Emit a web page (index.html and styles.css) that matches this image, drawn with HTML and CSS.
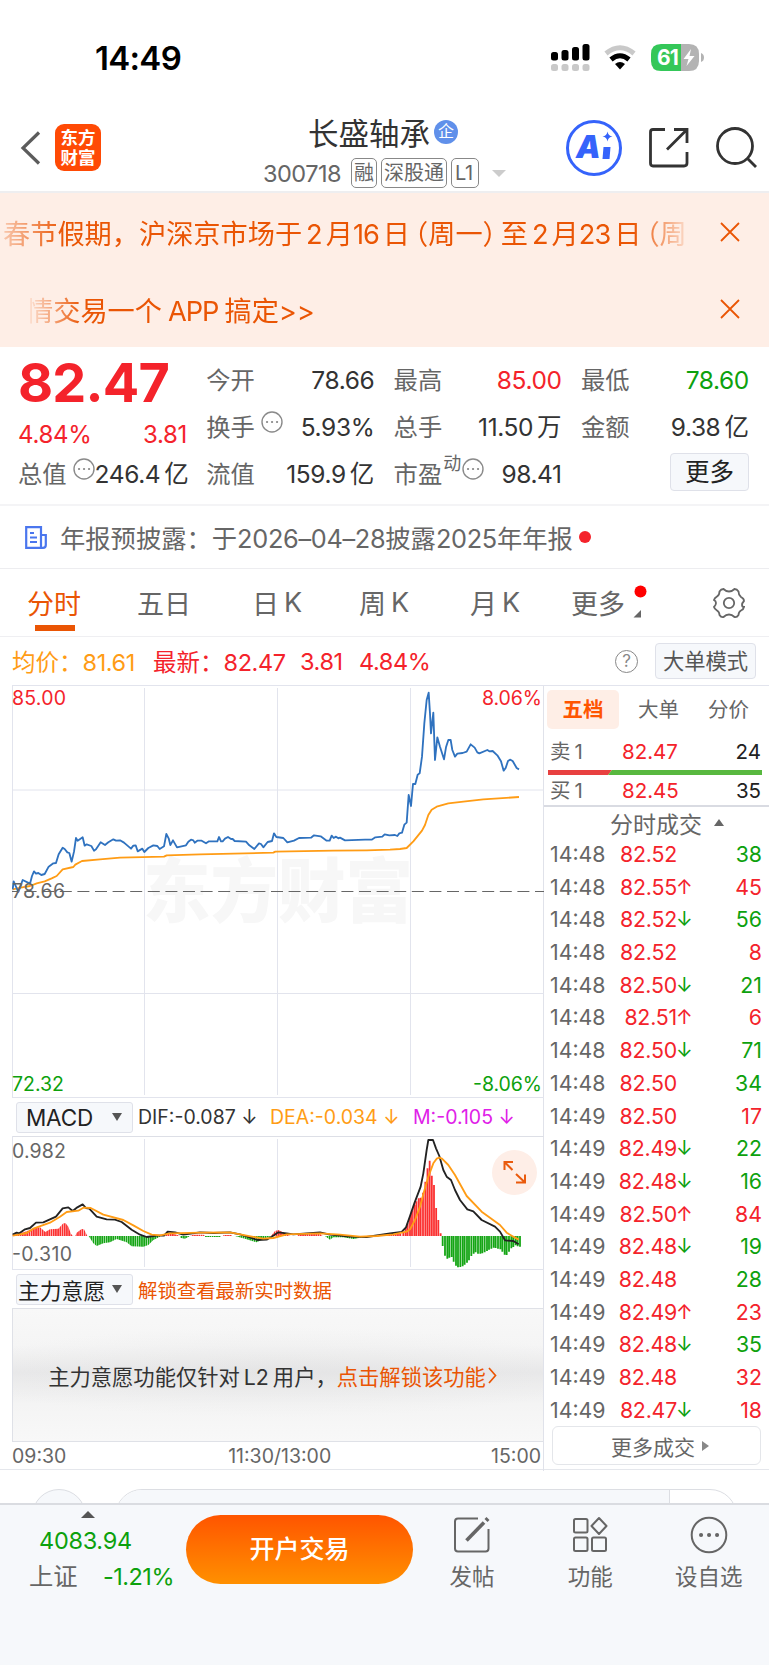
FILE: index.html
```html
<!DOCTYPE html>
<html lang="zh-CN">
<head>
<meta charset="utf-8">
<title>长盛轴承 300718</title>
<link rel="stylesheet" href="styles.css">
</head>
<body>
<div class="app">
  <div class="status">
    <span class="clock">14:49</span>
    <svg class="status-icons" width="156" height="30" viewBox="550 43 156 30">
      <g fill="#000"><rect x="551" y="52" width="7" height="8.500" rx="2.500"/><rect x="561.500" y="50" width="7" height="10.500" rx="2.500"/><rect x="572" y="47" width="7" height="13.500" rx="2.500"/><rect x="582.500" y="44" width="7" height="16.500" rx="2.500"/></g>
      <g fill="#c9c9c9"><rect x="551" y="64" width="7" height="7" rx="2.500"/><rect x="561.500" y="64" width="7" height="7" rx="2.500"/><rect x="572" y="64" width="7" height="7" rx="2.500"/><rect x="582.500" y="64" width="7" height="7" rx="2.500"/></g>
      <path d="M606 53.500Q620 42 634 53.500" fill="none" stroke="#c9c9c9" stroke-width="5"/>
      <path d="M611 59.500Q620 52 629 59.500" fill="none" stroke="#000" stroke-width="5"/>
      <path d="M615 64Q620 60 625 64L620 69.500Z"/>
      <path d="M661 44H681V71H661Q651 71 651 61V54Q651 44 661 44Z" fill="#34c759"/>
      <path d="M681 44H689Q699 44 699 54V61Q699 71 689 71H681Z" fill="#b3b3b3"/>
      <path d="M701 53Q704 54 704 57.500T701 62Z" fill="#b3b3b3"/>
      <text x="657" y="65" class="battery-num">61</text>
      <path d="M691 49L683.500 59H688.500L686.500 66L694.500 56H689.500Z" fill="#fff"/>
    </svg>
  </div>

  <header class="header">
    <svg class="back" width="22" height="36" viewBox="0 0 22 36"><path d="M19 2.500L3 18L19 33.500" fill="none" stroke="#5c5c5c" stroke-width="3.200"/></svg>
    <div class="logo"><span>东方</span><span>财富</span></div>
    <div class="stock">
      <div class="stock-name">长盛轴承<i class="corp">企</i></div>
      <div class="stock-code"><span class="code">300718</span><span class="tag">融</span><span class="tag">深股通</span><span class="tag tag-l1">L1</span><i class="caret"></i></div>
    </div>
    <svg class="tools" width="194" height="58" viewBox="564 119 194 58">
      <circle cx="594" cy="148" r="26.500" fill="none" stroke="#3563fb" stroke-width="3"/>
      <text x="576" y="158" class="ai">A</text><path d="M603.500 147H610.500L609.500 159H602.500Z" fill="#3563fb"/>
      <path d="M607.500 131.500Q608.200 135.800 612.500 136.500Q608.200 137.200 607.500 141.500Q606.800 137.200 602.500 136.500Q606.800 135.800 607.500 131.500Z" fill="#3563fb"/>
      <g fill="none" stroke="#333" stroke-width="2.800"><path d="M665 129.500H653Q650.500 129.500 650.500 132V163Q650.500 166 653 166H684Q687 166 687 163V152M674 129.500H687V143M686 130.500L667 149.500"/><circle cx="735" cy="146" r="17.500"/><path d="M747 158L756 167"/></g>
    </svg>
  </header>

  <section class="banners">
    <div class="banner"><div class="marquee fade-both">春节假期，沪深京市场于<span class="num">2</span>月<span class="num">16</span>日<span class="par">（</span>周一<span class="par close-par">）</span>至<span class="num">2</span>月<span class="num">23</span>日<span class="par">（</span>周一</div>
      <svg class="close" width="20" height="20" viewBox="0 0 20 20"><path d="M1 1L19 19M19 1L1 19"/></svg></div>
    <div class="banner second"><div class="marquee fade-left">情交易一个<span class="app-word">APP</span>搞定&gt;&gt;</div>
      <svg class="close" width="20" height="20" viewBox="0 0 20 20"><path d="M1 1L19 19M19 1L1 19"/></svg></div>
  </section>

  <section class="quote">
    <div class="qcol lead">
      <div class="price">82.47</div>
      <div class="change"><span>4.84%</span><span>3.81</span></div>
      <div class="qrow"><label>总值<svg class="dots" viewBox="0 0 22 22"><circle cx="11" cy="11" r="10"/><path d="M6 11h.1M11 11h.1M16 11h.1"/></svg></label><b>246.4<i>亿</i></b></div>
    </div>
    <div class="qcol">
      <div class="qrow"><label>今开</label><b>78.66</b></div>
      <div class="qrow"><label>换手<svg class="dots gap" viewBox="0 0 22 22"><circle cx="11" cy="11" r="10"/><path d="M6 11h.1M11 11h.1M16 11h.1"/></svg></label><b>5.93%</b></div>
      <div class="qrow"><label>流值</label><b>159.9<i>亿</i></b></div>
    </div>
    <div class="qcol">
      <div class="qrow"><label>最高</label><b class="up">85.00</b></div>
      <div class="qrow"><label>总手</label><b>11.50<i>万</i></b></div>
      <div class="qrow"><label>市盈<sup>动</sup><svg class="dots tight" viewBox="0 0 22 22"><circle cx="11" cy="11" r="10"/><path d="M6 11h.1M11 11h.1M16 11h.1"/></svg></label><b>98.41</b></div>
    </div>
    <div class="qcol">
      <div class="qrow"><label>最低</label><b class="down">78.60</b></div>
      <div class="qrow"><label>金额</label><b>9.38<i>亿</i></b></div>
      <div class="qrow end"><span class="more-btn">更多</span></div>
    </div>
  </section>

  <section class="notice">
    <svg width="22" height="23" viewBox="0 0 22 23"><path d="M1.200 1.200H16V21.800H1.200ZM16 9H20.800V19Q20.800 21.800 18 21.800H14M5 7H9M5 11.500H12M5 16H12" fill="none" stroke="#4a76ee" stroke-width="2.200"/></svg>
    <span class="notice-text">年报预披露：于<em>2026–04–28</em>披露<em>2025</em>年年报</span><i class="red-dot"></i>
  </section>

  <nav class="tabs">
    <span class="on">分时</span><span>五日</span><span>日<em>K</em></span><span>周<em>K</em></span><span>月<em>K</em></span>
    <span class="tab-more">更多<svg width="16" height="36" viewBox="0 0 16 36"><circle cx="9.500" cy="6.500" r="6" fill="#f00"/><path d="M10 25V32.500H2.500Z" fill="#666"/></svg></span>
    <svg class="gear" width="34" height="32" viewBox="-17 -16 34 32"><path d="M-5.500 -14Q-3 -11.500 0 -11.500T5.500 -14Q8 -14 9.500 -11.500Q9.500 -8 12 -6Q15 -4.500 15 -2Q13 0 13 2T15 4Q14.500 6.500 12 7.500Q9.500 9 9.500 12Q8 14.500 5.500 14Q3 11.500 0 11.500T-5.500 14Q-8 14.500 -9.500 12Q-9.500 9 -12 7.500Q-14.500 6 -15 4Q-13 2 -13 0T-15 -3Q-14.500 -5 -12 -6.500Q-9.500 -8 -9.500 -11.500Q-8 -14 -5.500 -14Z"/><circle r="5.200"/></svg>
  </nav>

  <section class="summary">
    <span class="avg">均价：<em>81.61</em></span><span class="last">最新：<em>82.47</em></span><span class="last n3"><em>3.81</em></span><span class="last n4"><em>4.84%</em></span>
    <i class="help">?</i><span class="mode-btn">大单模式</span>
  </section>

  <main class="board">
    <div class="charts">
      <svg class="minute" width="532" height="413" viewBox="12 685 532 413">
        <text class="mark" x="143" y="917" textLength="270" lengthAdjust="spacingAndGlyphs">东方财富</text>
        <path d="M12 685.500H544M12.500 685V1098M144.500 688V1095M277.500 688V1095M410.500 688V1095M12 790H544M12 993.500H544M12 1097.500H544" stroke="#e2e4ed" fill="none"/>
        <path d="M12 891.500H544" stroke="#666" stroke-dasharray="12 5.600" stroke-dashoffset="5"/>
        <g transform="translate(0 680) scale(.33333)" fill="none" stroke-width="5.500" stroke-linejoin="round">
          <polyline stroke="#ff9c15" points="38,628 62,623 90,618 110,610 134,604 155,595 170,588 188,568 220,561 226,554 246,543 300,538 360,533 492,530 500,526 600,523 820,518 826,515 1000,512 1100,511 1170,509 1200,507 1220,504 1240,484 1266,452 1275,435 1285,405 1295,389 1310,380 1345,370 1390,365 1450,358 1557,351"/>
          <polyline stroke="#2f72bf" points="38,628 41,604 55,636 68,600 90,611 96,588 102,574 108,581 115,579 124,585 134,582 146,560 160,550 168,549 176,523 188,503 194,507 202,517 208,519 215,545 222,515 228,474 233,482 248,472 254,497 260,493 274,498 282,512 288,508 302,487 315,495 325,487 340,478 348,482 360,481 372,488 393,506 400,497 407,496 413,514 427,506 433,516 445,504 460,496 472,498 479,507 492,499 499,462 506,475 511,495 519,481 531,502 558,496 565,485 573,479 580,481 584,488 592,482 605,482 618,490 627,484 652,484 657,471 663,484 668,484 675,476 684,471 693,477 698,477 704,483 738,485 748,496 763,507 777,490 783,492 790,502 803,486 816,483 822,460 829,471 850,474 862,487 882,482 897,474 933,473 942,466 962,469 980,482 989,482 995,467 1001,474 1008,470 1015,475 1020,473 1035,481 1095,479 1115,479 1126,472 1147,470 1154,463 1168,466 1185,465 1192,468 1198,460 1206,458 1213,434 1220,428 1226,345 1233,378 1239,312 1246,312 1253,284 1259,280 1266,230 1273,130 1280,60 1286,38 1290,100 1293,160 1300,98 1305,240 1312,172 1320,200 1332,238 1338,202 1345,180 1352,180 1357,210 1365,230 1372,221 1388,219 1400,215 1412,193 1424,203 1432,217 1438,220 1462,210 1468,214 1478,213 1492,226 1503,244 1511,272 1517,264 1524,243 1530,239 1538,243 1550,264 1557,268"/>
        </g>
        <g class="axis">
          <text x="12" y="705" fill="#f4232b" textLength="54">85.00</text><text x="542" y="705" fill="#f4232b" text-anchor="end" textLength="60">8.06%</text>
          <text x="12" y="898" fill="#666" textLength="53">78.66</text>
          <text x="12" y="1090.500" fill="#0da10d" textLength="52">72.32</text><text x="542" y="1090.500" fill="#0da10d" text-anchor="end" textLength="69">-8.06%</text>
        </g>
      </svg>

      <div class="indicator macd-row">
        <span class="pick macd-pick">MACD<i></i></span>
        <span class="dif">DIF:-0.087 ↓</span><span class="dea">DEA:-0.034 ↓</span><span class="macd">M:-0.105 ↓</span>
      </div>
      <svg class="macd-chart" width="532" height="134" viewBox="12 1136 532 134">
        <defs><pattern id="ticks" width="6.620" height="400" patternUnits="userSpaceOnUse"><rect width="5.200" height="400" fill="#14a514"/></pattern>
        <pattern id="ticksUp" width="6.620" height="400" patternUnits="userSpaceOnUse"><rect width="5.200" height="400" fill="#fb3030"/></pattern></defs>
        <path d="M12 1136.200H544" stroke="#dddfe6" stroke-width="1.800"/>
        <path d="M12.500 1136V1270M144.500 1139V1267M277.500 1139V1267M410.500 1139V1267M12 1269.500H544" stroke="#e2e4ed"/>
        <g transform="translate(0 1090) scale(.33333)" fill="none">
          <path fill="url(#ticksUp)" d="M38 438V434L60 430L80 424L100 414L120 412L136 426L150 418L175 416L190 400L197 400L205 410L213 432L220 438ZM226 438L230 428L245 417L252 418L262 438ZM495 438L505 428L530 434L540 438ZM570 438L580 434L610 434L616 438ZM670 438V435H696V438ZM813 438L825 423L835 420L855 430L870 438ZM890 438L900 433L960 432L968 438ZM1155 438L1170 433L1204 431V438Z"/>
          <path fill="url(#ticks)" d="M266 438L280 460L290 468L310 460L330 457L350 447L380 457L395 469L430 470L445 465L460 450L480 440V438ZM540 438V443L555 446L570 438ZM615 438V441H662V438ZM705 438L740 448L770 457L790 447L815 438ZM975 438L990 449L1000 442L1030 442L1060 447L1110 438Z"/>
          <g transform="translate(1140 0)" stroke-width="5.400">
            <path stroke="#fb3030" d="M70 438V425M77 438V414M83 438V400M90 438V378M96 438V362M103 438V345M109 438V334M116 438V325M122 438V323M129 438V308M136 438V275M142.500 438V235M149 438V212M155.500 438V257M162 438V285M168.500 438V354M175 438V390M182 438V430"/>
            <path stroke="#14a514" d="M188 438V468M195 438V497M202 438V506M208 438V503M215 438V501M221 438V515M228 438V527M234 438V532M241 438V531M248 438V529M254 438V524M261 438V518M267 438V511M274 438V498M281 438V491M287 438V487M294 438V491M301 438V491M307 438V490M314 438V487M321 438V483M327 438V479M334 438V476M341 438V473M347 438V474M354 438V476M361 438V478M367 438V485M374 438V494M380 438V495M387 438V485M394 438V475M400 438V471M407 438V466M413 438V469M420 438V470"/>
          </g>
          <g stroke-width="5.500" stroke-linejoin="round">
            <polyline stroke="#222" points="38,434 50,428 58,430 75,418 90,414 108,398 130,397 168,380 188,355 205,352 218,363 232,352 248,343 258,354 268,356 290,380 320,388 345,389 365,396 395,419 420,434 440,441 470,437 492,437 503,425 525,427 550,434 600,427 640,429 690,427 720,433 745,441 772,450 800,449 815,440 835,427 860,430 880,433 960,427 990,434 1050,440 1100,441 1140,435 1170,430 1205,426 1218,412 1230,378 1243,340 1262,290 1270,250 1280,180 1285,150 1299,150 1308,175 1318,198 1330,240 1340,260 1353,270 1365,300 1380,330 1402,358 1420,364 1445,390 1485,410 1500,425 1515,451 1540,453 1556,463"/>
            <polyline stroke="#ff9c15" points="38,437 60,433 80,429 100,416 150,398 180,380 200,366 235,362 250,353 272,354 310,374 370,390 400,406 430,423 455,434 480,436 510,430 600,428 690,427 740,437 790,446 820,444 860,433 960,430 1020,434 1080,440 1130,438 1180,433 1220,425 1230,418 1245,390 1260,350 1272,305 1285,260 1300,220 1310,206 1318,203 1326,206 1345,225 1365,255 1400,318 1445,365 1500,405 1520,428 1540,440 1556,449"/>
          </g>
        </g>
        <g class="axis" fill="#666"><text x="12" y="1157.500" textLength="54">0.982</text><text x="12" y="1261" textLength="60">-0.310</text></g>
        <circle cx="514.500" cy="1172.500" r="22.500" fill="#feeee7"/>
        <path d="M504.500 1170V1162H513M505 1162.500L512.500 1170M525 1174.500V1182.500H516M524.500 1182L516 1174" fill="none" stroke="#ea5a0c" stroke-width="2"/>
      </svg>
      <div class="indicator will-row"><span class="pick">主力意愿<i></i></span><span class="unlock">解锁查看最新实时数据</span></div>
      <div class="locked"><span>主力意愿功能仅针对<em>L2</em>用户，</span><span class="go">点击解锁该功能<svg width="9" height="17" viewBox="0 0 9 17"><path d="M1 1L7.500 8.500L1 16" fill="none" stroke="#ea5504" stroke-width="1.700"/></svg></span></div>
      <div class="times"><span>09:30</span><span class="mid">11:30/13:00</span><span>15:00</span></div>
    </div>

    <aside class="book">
      <div class="book-tabs"><span class="active">五档</span><span>大单</span><span>分价</span></div>
      <div class="level"><span>卖<em>1</em></span><b>82.47</b><i>24</i></div>
      <svg class="ratio" width="214" height="5" viewBox="0 0 214 5"><path d="M0 0H64L60 5H0Z" fill="#e84040"/><path d="M64 0H214V5H60Z" fill="#58b83f"/></svg>
      <div class="level buy"><span>买<em>1</em></span><b>82.45</b><i>35</i></div>
      <div class="deals-title">分时成交<i></i></div>
      <div class="deals">
        <div class="deal"><span>14:48</span><b>82.52</b><u></u><i class="down">38</i></div>
        <div class="deal"><span>14:48</span><b>82.55</b><u class="up">↑</u><i class="up">45</i></div>
        <div class="deal"><span>14:48</span><b>82.52</b><u class="down">↓</u><i class="down">56</i></div>
        <div class="deal"><span>14:48</span><b>82.52</b><u></u><i class="up">8</i></div>
        <div class="deal"><span>14:48</span><b>82.50</b><u class="down">↓</u><i class="down">21</i></div>
        <div class="deal"><span>14:48</span><b>82.51</b><u class="up">↑</u><i class="up">6</i></div>
        <div class="deal"><span>14:48</span><b>82.50</b><u class="down">↓</u><i class="down">71</i></div>
        <div class="deal"><span>14:48</span><b>82.50</b><u></u><i class="down">34</i></div>
        <div class="deal"><span>14:49</span><b>82.50</b><u></u><i class="up">17</i></div>
        <div class="deal"><span>14:49</span><b>82.49</b><u class="down">↓</u><i class="down">22</i></div>
        <div class="deal"><span>14:49</span><b>82.48</b><u class="down">↓</u><i class="down">16</i></div>
        <div class="deal"><span>14:49</span><b>82.50</b><u class="up">↑</u><i class="up">84</i></div>
        <div class="deal"><span>14:49</span><b>82.48</b><u class="down">↓</u><i class="down">19</i></div>
        <div class="deal"><span>14:49</span><b>82.48</b><u></u><i class="down">28</i></div>
        <div class="deal"><span>14:49</span><b>82.49</b><u class="up">↑</u><i class="up">23</i></div>
        <div class="deal"><span>14:49</span><b>82.48</b><u class="down">↓</u><i class="down">35</i></div>
        <div class="deal"><span>14:49</span><b>82.48</b><u></u><i class="up">32</i></div>
        <div class="deal"><span>14:49</span><b>82.47</b><u class="down">↓</u><i class="up">18</i></div>
      </div>
      <div class="more-deals">更多成交<i></i></div>
    </aside>
  </main>

  <div class="peek"><i class="peek-circle"></i><div class="peek-pill"><i></i></div></div>

  <footer class="dock">
    <div class="index"><i class="tri"></i><div class="idx-val">4083.94</div><div class="idx-row"><span>上证</span><em>-1.21%</em></div></div>
    <div class="trade">开户交易</div>
    <div class="action"><svg width="38" height="38" viewBox="0 0 38 38"><path d="M25 2.500H5Q2 2.500 2 5.500V32.500Q2 35.500 5 35.500H32.500Q35.500 35.500 35.500 32.500V13"/><path d="M13.500 24.500L31 6.500" stroke-width="3.600"/><path d="M33 4.500L35 2.500" stroke-width="4.200"/></svg>发帖</div>
    <div class="action"><svg width="38" height="38" viewBox="0 0 38 38"><rect x="3" y="3" width="13.500" height="13.500" rx="1.500"/><rect x="3" y="21.500" width="13.500" height="13.500" rx="1.500"/><rect x="21" y="21.500" width="14" height="13.500" rx="1.500"/><path d="M28 2L35.500 10L28 18L20.500 10Z" stroke-linejoin="round"/></svg>功能</div>
    <div class="action"><svg width="38" height="38" viewBox="0 0 38 38"><circle cx="19" cy="19" r="17.300"/><path d="M11 19h.1M19 19h.1M27 19h.1" stroke-width="4" stroke-linecap="round"/></svg>设自选</div>
  </footer>
</div>
</body>
</html>
```
FILE: styles.css
```css
* { box-sizing: border-box; }
body { margin: 0; background: #fff; font-family: Inter, "Noto Sans CJK SC", sans-serif; color: #333; }
i, em { font-style: normal; }
b { font-weight: 400; }
u { text-decoration: none; }
svg { display: block; flex: none; }
.app { width: 769px; height: 1665px; overflow: hidden; white-space: nowrap; }
.up { color: #f4232b; }
.down { color: #0da10d; }

/* status bar */
.status { display: flex; height: 100px; padding: 43px 0 0 95px; }
.clock { width: 455px; font-size: 33px; font-weight: 600; line-height: 30px; color: #000; letter-spacing: -.7px; }
.battery-num { font: 700 21px Inter, sans-serif; fill: #fff; letter-spacing: -1px; }

/* header */
.header { display: flex; height: 93px; border-bottom: 2px solid #eeeef0; }
.back { margin: 30px 13px 0 20px; }
.logo { display: flex; flex-direction: column; justify-content: center; align-items: center; width: 46px; height: 47px; margin-top: 24px; border-radius: 9px; background: #ff4a05; color: #fff; font-size: 17.5px; font-weight: 700; line-height: 20px; }
.stock { width: 463px; padding-top: 15px; }
.stock-name { display: flex; align-items: center; height: 34px; margin-left: 207px; font-size: 30.5px; }
.corp { width: 24px; height: 24px; margin-left: 4px; border-radius: 50%; background: #6090ea; color: #fff; font-size: 16px; line-height: 23px; text-align: center; }
.stock-code { display: flex; align-items: center; height: 30px; margin: 9px 0 0 162px; color: #666; }
.code { width: 88px; font-size: 23.5px; letter-spacing: -.5px; }
.tag { height: 30px; margin-right: 4px; padding: 0 2px; border: 1px solid #888; border-radius: 5px; font-size: 20px; line-height: 28px; }
.tag-l1 { width: 28px; padding: 0 3px; letter-spacing: -.5px; }
.caret { margin-left: 9px; border: 7px solid transparent; border-top-color: #ccc; border-bottom: 0; }
.tools { margin-top: 19px; }
.ai { font: italic 900 31px Inter, sans-serif; fill: #3563fb; }

/* announcement banners */
.banners { height: 154px; background: #feeee6; }
.banner { display: flex; align-items: center; height: 77px; padding-left: 3px; color: #ea5504; font-size: 27.2px; }
.second { padding-left: 30px; }
.marquee { width: 685px; overflow: hidden; }
.fade-both { -webkit-mask-image: linear-gradient(90deg, rgba(0,0,0,.25), #000 60px, #000 630px, rgba(0,0,0,.1) 685px); }
.fade-left { width: 658px; text-indent: -4px; -webkit-mask-image: linear-gradient(90deg, rgba(0,0,0,.1), #000 52px); }
.num { margin: 0 4px; letter-spacing: -1px; }
.num + .num { margin-left: 0; }
.par { margin-left: -9px; }
.close-par { margin-left: 0; margin-right: -9px; }
.app-word { margin: 0 6px; letter-spacing: -1px; }
.close { margin-left: 32px; fill: none; stroke: #ea5504; stroke-width: 1.8; }

/* quote summary */
.quote { display: grid; grid-template-columns: 169px repeat(3, 168px); gap: 19.3px; height: 159px; padding: 10px 0 0 18px; border-bottom: 2px solid #f4f4f6; }
.lead { margin-top: -10px; }
.price { height: 71px; font-size: 54px; font-weight: 700; line-height: 71px; color: #f4232b; letter-spacing: -.8px; }
.change { display: flex; justify-content: space-between; height: 33px; color: #f4232b; font-size: 24px; line-height: 33px; letter-spacing: -.3px; }
.qrow { display: flex; align-items: center; justify-content: space-between; height: 47px; font-size: 24.500px; line-height: 47px; }
.qrow label { position: relative; display: flex; align-items: center; color: #666; font-size: 24.300px; }
.qrow b { letter-spacing: -.4px; }
.qrow b i { margin-left: 4px; letter-spacing: 0; }
.dots { width: 22px; height: 22px; margin: -11px 0 0 6px; fill: none; stroke: #8a8a8a; stroke-width: 1.4; }
.dots path { stroke-width: 2.2; stroke-linecap: round; }
.tight { margin-left: 1px; }
sup { margin: -22px 0 0 1px; font-size: 18px; line-height: 20px; vertical-align: baseline; }
.end { justify-content: flex-end; }
.more-btn { width: 79px; height: 38px; margin-top: -6px; border: 1px solid #dfe1e9; border-radius: 4px; background: #f6f8fb; color: #222; font-size: 24.500px; line-height: 36px; text-align: center; }

/* notice */
.notice { display: flex; align-items: center; height: 63px; padding-left: 25px; border-bottom: 1px solid #ededf0; }
.notice-text { margin-left: 13px; color: #666; font-size: 25.300px; }
.notice-text em { letter-spacing: -.3px; }
.red-dot { width: 12px; height: 12px; margin-left: 6px; border-radius: 50%; background: #f4232b; }

/* tabs */
.tabs { display: grid; grid-template-columns: 110px 115px 107px 111px 101px 143px 34px; align-items: center; height: 68px; padding-left: 27px; border-bottom: 1px solid #efeff2; color: #666; font-size: 27px; }
.tabs span { display: flex; align-items: center; height: 67px; }
.tabs em { margin-left: 5px; letter-spacing: 0; }
.tabs .on { width: 55px; color: #ea5504; background: linear-gradient(#ea5504, #ea5504) 8px 56px / 40px 6px no-repeat; }
.tab-more svg { margin-left: 6px; }
.gear { margin-left: -2px; fill: none; stroke: #666; stroke-width: 1.8; }

/* price summary line */
.summary { display: flex; align-items: center; height: 48px; padding-left: 12px; font-size: 23.500px; }
.summary em { letter-spacing: -.4px; }
.summary span { flex: none; }
.avg { width: 141px; color: #ff9c15; }
.last { width: 147px; color: #f4232b; }
.n3 { width: 59px; }
.n4 { width: 256px; }
.help { width: 23px; height: 23px; border: 1.5px solid #888; border-radius: 50%; color: #888; font-size: 17px; line-height: 20px; text-align: center; }
.mode-btn { width: 101px; height: 36px; margin-left: 17px; border: 1px solid #dfe1e9; border-radius: 4px; background: #f6f8fb; color: #555; font-size: 21.300px; line-height: 34px; text-align: center; }

/* board */
.board { display: grid; grid-template-columns: 544px 225px; height: 785px; border-bottom: 1px solid #e5e7ec; }
.charts { padding-left: 12px; border-right: 1px solid #e0e2ea; }
.minute, .macd-chart { width: 532px; }
.mark { font: 900 70px "Noto Sans CJK SC", sans-serif; fill: #f7f7f7; }
.axis { font: 19.5px Inter, sans-serif; }
.indicator { display: flex; align-items: center; height: 38px; padding-left: 4px; font-size: 19.500px; }
.pick { display: flex; align-items: center; justify-content: space-between; width: 117px; height: 31px; margin-right: 5px; padding: 0 10px 0 1px; border: 1px solid #dfe1e9; border-radius: 3px; background: #f6f8fb; color: #222; font-size: 21.800px; }
.pick i { border: 5px solid transparent; border-top: 8px solid #555; border-bottom: 0; }
.macd-pick { padding-left: 9px; font-size: 22.500px; letter-spacing: -.2px; }
.dif, .dea { width: 132px; flex: none; }
.dif { color: #333; }
.dea { width: 143px; color: #ff9c15; }
.macd { color: #e020e8; }
.unlock { color: #ea5504; font-size: 19.400px; }
.locked { display: flex; align-items: center; justify-content: center; height: 134px; padding-right: 11px; border: 1px solid #dfe1e7; border-right: 0; background: radial-gradient(ellipse 330px 45px at 50% 48%, rgba(220,220,220,.35), transparent), linear-gradient(#f8f8f8, #f5f5f5 28%, #e9e9ea 48%, #f4f4f4 72%, #f8f8f8); color: #333; font-size: 21.300px; }
.locked em { margin: 0 4px; }
.go { display: flex; align-items: center; color: #ea5504; }
.go svg { margin-left: 2px; }
.times { display: flex; justify-content: space-between; padding-right: 2px; color: #666; font-size: 19.500px; line-height: 29px; }
.mid { margin-left: 2px; }

/* order book */
.book { padding-left: 3px; border-top: 1px solid #e2e4ed; }
.book-tabs { display: flex; justify-content: space-between; height: 49px; padding: 4px 20px 0 0; color: #666; font-size: 20.500px; line-height: 39px; }
.book-tabs .active { width: 72px; height: 39px; margin-right: -10px; border-radius: 5px; background: #feeee6; color: #ff5500; font-weight: 700; text-align: center; }
.level { display: grid; grid-template-columns: 55px 78px 82px; height: 35px; padding-left: 3px; font-size: 20.500px; line-height: 33px; }
.level span { padding: 0; color: #666; }
.level em { margin-left: 4px; }
.level b { padding-left: 17px; color: #f4232b; }
.level i { color: #222; text-align: right; padding-right: 4px; }
.ratio { margin-left: 1px; }
.buy { height: 30px; line-height: 31px; }
.deals-title { display: flex; align-items: center; height: 33px; margin-left: -3px; padding-left: 66px; border-top: 2px solid #d9dbe2; color: #666; font-size: 23px; }
.deals-title i { margin-left: 12px; border: 5px solid transparent; border-top: 0; border-bottom: 7px solid #666; }
.deal { display: grid; grid-template-columns: 57px 70px 15px 70px; height: 32.690px; padding-left: 3px; font-size: 21.300px; line-height: 32.690px; }
.deal span { color: #666; }
.deal b { color: #f4232b; text-align: right; letter-spacing: -.2px; }
.deal i { text-align: right; }
.deal u { font-size: 20px; margin-left: -1px; }
.more-deals { display: flex; align-items: center; width: 209px; height: 39px; margin: 0 0 0 5px; padding-left: 58px; border: 1px solid #e4e6ea; border-radius: 6px; color: #666; font-size: 21px; }
.more-deals i { margin-left: 7px; border: 5px solid transparent; border-right: 0; border-left: 7px solid #888; }

/* content showing above the dock */
.peek { display: flex; height: 33px; padding: 19px 0 0 32px; overflow: hidden; }
.peek-circle { width: 54px; height: 54px; border: 1px solid #dcdee3; border-radius: 50%; background: #f6f8fb; }
.peek-pill { width: 622px; height: 54px; margin-left: 29px; overflow: hidden; border: 1px solid #dcdee3; border-radius: 27px; background: #fff; }
.peek-pill i { display: block; width: 554px; height: 54px; border-right: 1px solid #dcdee3; background: #f6f8fb; }

/* dock */
.dock { display: flex; height: 162px; border-top: 2px solid #dadce1; background: #f6f8fb; }
.index { width: 186px; padding-top: 6px; }
.tri { display: block; width: 0; margin-left: 81px; border: 7px solid transparent; border-top: 0; border-bottom: 7px solid #555; }
.idx-val { margin: 6px 0 0 39px; color: #0da10d; font-size: 23.500px; line-height: 34px; letter-spacing: -.3px; }
.idx-row { display: flex; justify-content: space-between; padding: 0 12px 0 29px; font-size: 24.300px; line-height: 37px; color: #666; }
.idx-row em { color: #0da10d; font-size: 23.500px; letter-spacing: -.5px; }
.trade { width: 227px; height: 69px; margin: 10px 0 0; border-radius: 34.5px; background: linear-gradient(#ff5500, #ff9000); color: #fff; font-size: 25px; font-weight: 500; line-height: 69px; text-align: center; }
.action { display: flex; flex-direction: column; align-items: center; width: 118.5px; padding-top: 11px; color: #666; font-size: 22.500px; line-height: 46px; }
.trade + .action { width: 118px; }
.action svg { fill: none; stroke: #666; stroke-width: 2; }
```
